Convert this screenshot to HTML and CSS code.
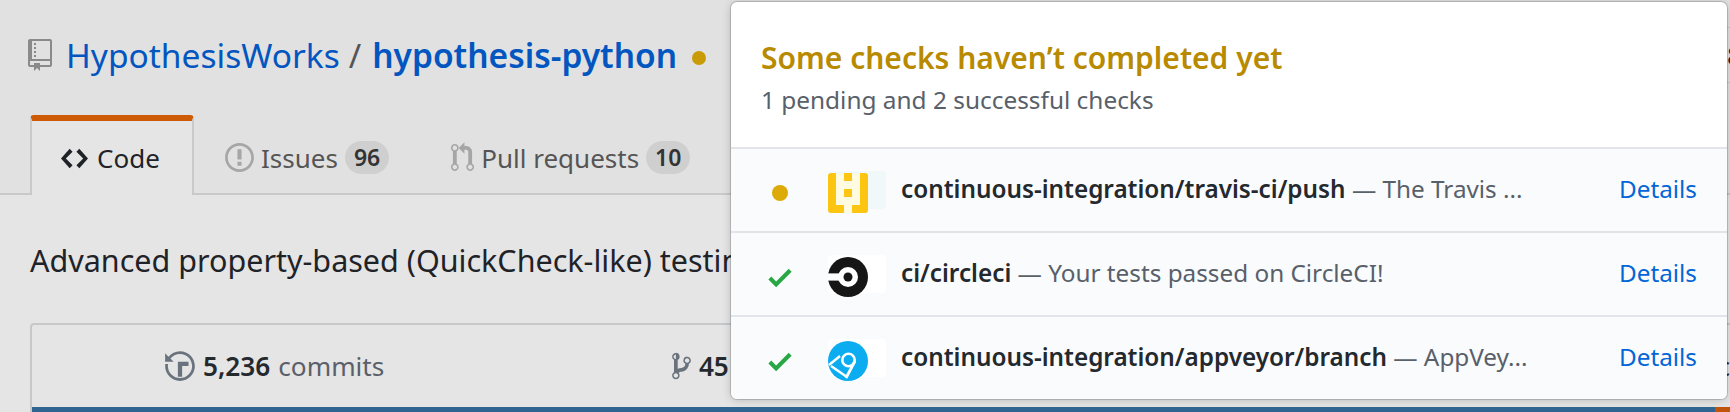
FILE: index.html

```html
<!DOCTYPE html>
<html lang="en">
<head>
  <meta charset="UTF-8" />
  <title>HypothesisWorks / hypothesis-python</title>
  <link rel="stylesheet" href="styles.css">
</head>
<body>

<div class="pagehead">
  <div class="repo-row">
    <h1 class="repo-title">
      <svg class="repo-icon" viewBox="0 0 12 16"><path d="M4 9H3V8h1v1zm0-3H3v1h1V6zm0-2H3v1h1V4zm0-2H3v1h1V2zm8-1v12c0 .55-.45 1-1 1H6v2l-1.5-1.5L3 16v-2H1c-.55 0-1-.45-1-1V1c0-.55.45-1 1-1h10c.55 0 1 .45 1 1zm-1 10H1v2h2v-1h3v1h5v-2zm0-10H2v9h9V1z"/></svg>
      <a href="#">HypothesisWorks</a>
      <span class="slash">/</span>
      <a href="#"><strong>hypothesis-python</strong></a>
      <span class="title-dot"></span>
    </h1>
    <div class="watch-count">8</div>
  </div>
  <nav class="tabs">
    <a class="tab selected" href="#">
      <svg class="tab-icon code-icon" viewBox="0 0 14 16"><path d="M9.5 3L8 4.5 11.5 8 8 11.5 9.5 13 14 8 9.5 3zm-5 0L0 8l4.5 5L6 11.5 2.5 8 6 4.5 4.5 3z"/></svg>
      Code
    </a>
    <a class="tab" href="#">
      <svg class="tab-icon" viewBox="0 0 14 16"><path d="M7 2.3c3.14 0 5.7 2.56 5.7 5.7s-2.56 5.7-5.7 5.7A5.71 5.71 0 0 1 1.3 8c0-3.14 2.56-5.7 5.7-5.7zM7 1C3.14 1 0 4.14 0 8s3.14 7 7 7 7-3.14 7-7-3.14-7-7-7zm1 3H6v5h2V4zm0 6H6v2h2v-2z"/></svg>
      Issues <span class="counter">96</span>
    </a>
    <a class="tab" href="#">
      <svg class="tab-icon pr-icon" viewBox="0 0 12 16"><path d="M11 11.28V5c-.03-.78-.34-1.47-.94-2.06C9.46 2.35 8.78 2.03 8 2H7V0L4 3l3 3V4h1c.27.02.48.11.69.31.21.2.3.42.31.69v6.28A1.993 1.993 0 0 0 10 15a1.993 1.993 0 0 0 1-3.72zm-1 2.92c-.66 0-1.2-.55-1.2-1.2 0-.65.55-1.2 1.2-1.2.65 0 1.2.55 1.2 1.2 0 .65-.55 1.2-1.2 1.2zM4 3c0-1.11-.89-2-2-2a1.993 1.993 0 0 0-1 3.72v6.56A1.993 1.993 0 0 0 2 15a1.993 1.993 0 0 0 1-3.72V4.72c.59-.34 1-.98 1-1.72zm-.8 10c0 .66-.55 1.2-1.2 1.2-.65 0-1.2-.55-1.2-1.2 0-.65.55-1.2 1.2-1.2.65 0 1.2.55 1.2 1.2zM2 4.2C1.34 4.2.8 3.65.8 3c0-.65.55-1.2 1.2-1.2.65 0 1.2.55 1.2 1.2 0 .65-.55 1.2-1.2 1.2z"/></svg>
      Pull requests <span class="counter">10</span>
    </a>
  </nav>
</div>

<p class="repo-desc">Advanced property-based (QuickCheck-like) testing for Python</p>

<div class="summary">
  <div class="numbers">
    <div class="num num-commits">
      <svg class="num-icon" viewBox="0 0 14 16"><path d="M8 13H6V6h5v2H8v5zM7 1C4.81 1 2.87 2.02 1.59 3.59L0 2v4h4L2.5 4.5C3.55 3.17 5.17 2.3 7 2.3c3.14 0 5.7 2.56 5.7 5.7s-2.56 5.7-5.7 5.7A5.71 5.71 0 0 1 1.3 8c0-.34.03-.67.09-1H.08C.03 7.33 0 7.66 0 8c0 3.86 3.14 7 7 7s7-3.14 7-7-3.14-7-7-7z"/></svg>
      <strong>5,236</strong> commits
    </div>
    <div class="num num-branches">
      <svg class="num-icon branch-icon" viewBox="0 0 10 16"><path d="M10 5c0-1.11-.89-2-2-2a1.993 1.993 0 0 0-1 3.72v.3c-.02.52-.23.98-.63 1.38-.4.4-.86.61-1.38.63-.83.02-1.48.16-2 .45V4.72a1.993 1.993 0 0 0-1-3.72C.88 1 0 1.89 0 3a2 2 0 0 0 1 1.72v6.56c-.59.35-1 .99-1 1.72 0 1.11.89 2 2 2 1.11 0 2-.89 2-2 0-.53-.2-1-.53-1.36.09-.06.48-.41.59-.47.25-.11.56-.17.94-.17 1.05-.05 1.95-.45 2.75-1.25S8.95 7.77 9 6.73h-.02C9.59 6.37 10 5.73 10 5zM2 1.8c.66 0 1.2.55 1.2 1.2 0 .65-.55 1.2-1.2 1.2C1.35 4.2.8 3.65.8 3c0-.65.55-1.2 1.2-1.2.65 0 1.2.55 1.2 1.2 0 .65-.55 1.2-1.2 1.2zm0 12.41c-.66 0-1.2-.55-1.2-1.2 0-.65.55-1.2 1.2-1.2.65 0 1.2.55 1.2 1.2 0 .65-.55 1.2-1.2 1.2zm6-8c-.66 0-1.2-.55-1.2-1.2 0-.65.55-1.2 1.2-1.2.65 0 1.2.55 1.2 1.2 0 .65-.55 1.2-1.2 1.2z"/></svg>
      <strong>45</strong> branches
    </div>
    <div class="num num-last">c</div>
  </div>
  <div class="lang-bar">
    <span class="lang-python"></span>
    <span class="lang-other"></span>
  </div>
</div>

<div class="checks-popover">
  <div class="checks-head">
    <div class="checks-title">Some checks haven’t completed yet</div>
    <div class="checks-sub">1 pending and 2 successful checks</div>
  </div>

  <div class="check-row">
    <div class="check-status"><span class="pending-dot"></span></div>
    <div class="app-tile tile-travis">
      <svg viewBox="0 0 40 40">
        <rect width="40" height="40" rx="3" fill="#fcc512"/>
        <path fill="#fffbe0" d="M8 0h24v32H8zM16 32h8v8h-8z"/>
        <path fill="#fcc512" d="M16 0h8v8h-8zM16 16h8v8h-8z"/>
      </svg>
    </div>
    <div class="check-text"><strong>continuous-integration/travis-ci/push</strong> — The Travis ...</div>
    <a class="check-details" href="#">Details</a>
  </div>

  <div class="check-row">
    <div class="check-status">
      <svg class="check-mark" viewBox="0 0 12 16"><path d="M12 5l-8 8-4-4 1.5-1.5L4 10l6.5-6.5L12 5z"/></svg>
    </div>
    <div class="app-tile tile-white">
      <svg viewBox="0 0 40 40">
        <circle cx="20" cy="20" r="20" fill="#161616"/>
        <path fill="#fff" d="M0 16.4h20v7.2H0z"/>
        <circle cx="20" cy="20" r="10" fill="#fff"/>
        <circle cx="20" cy="20" r="4.5" fill="#161616"/>
      </svg>
    </div>
    <div class="check-text"><strong>ci/circleci</strong> — Your tests passed on CircleCI!</div>
    <a class="check-details" href="#">Details</a>
  </div>

  <div class="check-row">
    <div class="check-status">
      <svg class="check-mark" viewBox="0 0 12 16"><path d="M12 5l-8 8-4-4 1.5-1.5L4 10l6.5-6.5L12 5z"/></svg>
    </div>
    <div class="app-tile tile-white">
      <svg viewBox="0 0 40 40">
        <circle cx="20" cy="20" r="20" fill="#0bacf0"/>
        <circle cx="20.5" cy="19" r="6.2" fill="none" stroke="#fff" stroke-width="2.6"/>
        <path fill="none" stroke="#fff" stroke-width="2.4" d="M1 24l11-9M3 25l16 11"/>
        <path fill="none" stroke="#fff" stroke-width="2.8" d="M27 20L18 37"/>
      </svg>
    </div>
    <div class="check-text"><strong>continuous-integration/appveyor/branch</strong> — AppVey...</div>
    <a class="check-details" href="#">Details</a>
  </div>
</div>

</body>
</html>
```

FILE: styles.css

```css
body {
  margin: 0;
  width: 1730px;
  height: 412px;
  overflow: hidden;
  position: relative;
  font-family: "Noto Sans", sans-serif;
  background: #e5e5e5;
  color: #1f2328;
}

a {
  text-decoration: none;
}

.pagehead {
  background: #e1e1e1;
  height: 195px;
  box-sizing: border-box;
  border-bottom: 2px solid #c9c9c9;
}

.repo-row {
  display: flex;
  justify-content: space-between;
  height: 115px;
}

.repo-title {
  display: flex;
  align-items: center;
  gap: 9px;
  margin: 0;
  padding-left: 28px;
  height: 109px;
  box-sizing: border-box;
  font-size: 33.5px;
  font-weight: 400;
}

.repo-title a {
  color: #0356c0;
}

.repo-title strong {
  font-weight: 600;
}

.slash {
  color: #555;
  margin-right: 2px;
}

.repo-icon {
  width: 24px;
  height: 32px;
  fill: #8a8a8a;
  margin-right: 5px;
}

.title-dot {
  width: 14px;
  height: 14px;
  border-radius: 50%;
  background: #c99b06;
  margin: 7px 0 0 6px;
}

.watch-count {
  width: 3px;
  height: 54px;
  margin-top: 27px;
  border-top: 1px solid #c9c9c9;
  border-bottom: 1px solid #c9c9c9;
  font-size: 26px;
  line-height: 54px;
  overflow: hidden;
}

.tabs {
  display: flex;
  height: 79px;
  padding-left: 30px;
  align-items: flex-start;
}

.tab {
  display: flex;
  align-items: center;
  gap: 7px;
  height: 73px;
  padding-top: 6px;
  font-size: 26px;
  color: #555;
  margin-right: 62px;
}

.tab.selected {
  width: 164px;
  box-sizing: border-box;
  height: 80px;
  padding: 0 0 0 29px;
  gap: 9px;
  margin-right: 31px;
  color: #1f2328;
  background: #e5e5e5;
  border: solid #c9c9c9;
  border-width: 6px 2px 0;
  border-top-color: #ce5a06;
  border-radius: 4px 4px 0 0;
}

.tab-icon {
  width: 29px;
  height: 33px;
  fill: #a6a6a6;
}

.code-icon {
  width: 27px;
  height: 31px;
  fill: #1f2328;
}

.pr-icon {
  width: 23px;
  height: 31px;
}

.counter {
  display: inline-block;
  padding: 0 9px;
  height: 33px;
  line-height: 33px;
  border-radius: 17px;
  background: #cfcfcf;
  color: #333;
  font-size: 23px;
  font-weight: 600;
  text-align: center;
}

.repo-desc {
  margin: 0;
  padding: 47px 0 0 30px;
  height: 128px;
  box-sizing: border-box;
  font-size: 30.5px;
  line-height: 36px;
  white-space: nowrap;
}

.summary {
  margin-left: 30px;
  border: solid #c6c8ca;
  border-width: 2px 0 0 2px;
  border-radius: 4px 0 0 0;
}

.numbers {
  display: flex;
  height: 82px;
  font-size: 26.2px;
  color: #5a6069;
}

.num {
  display: flex;
  align-items: center;
  gap: 8px;
  white-space: nowrap;
}

.num strong {
  color: #24292e;
  font-weight: 600;
}

.num-commits {
  margin-left: 133px;
  width: 510px;
}

.num-branches {
  width: 1052px;
}

.num-last {
  color: #24292e;
}

.num-icon {
  width: 30px;
  height: 34px;
  fill: #6a737d;
}

.branch-icon {
  width: 19px;
  height: 30px;
}

.lang-bar {
  display: flex;
  height: 6px;
}

.lang-python {
  flex: 1;
  background: #2f6590;
}

.lang-other {
  width: 15px;
  background: #c0540c;
}

/* popover sits over the page */
.checks-popover {
  position: absolute;
  left: 731px;
  top: 2px;
  width: 996px;
  height: 397px;
  background: #fff;
  border-radius: 6px;
  box-shadow: 0 0 0 1px rgba(0, 0, 0, 0.15), 0 1px 10px rgba(0, 0, 0, 0.2);
  overflow: hidden;
}

.checks-head {
  height: 145px;
  box-sizing: border-box;
  padding: 34px 0 0 30px;
}

.checks-title {
  color: #b88a00;
  font-size: 30px;
  font-weight: 600;
  line-height: 44px;
}

.checks-sub {
  color: #586069;
  font-size: 24.4px;
  line-height: 40px;
}

.check-row {
  display: flex;
  align-items: center;
  height: 84px;
  box-sizing: border-box;
  background: #fafbfd;
  border-top: 2px solid #e1e4e8;
  font-size: 24.3px;
}

.check-status {
  width: 97px;
  display: flex;
  justify-content: center;
  flex-shrink: 0;
  padding-top: 6px;
}

.pending-dot {
  width: 16px;
  height: 16px;
  border-radius: 50%;
  background: #dcab08;
}

.check-mark {
  width: 24px;
  height: 31px;
  fill: #28a745;
}

.app-tile {
  width: 58px;
  height: 38px;
  border-radius: 4px;
  flex-shrink: 0;
  margin-right: 15px;
}

.app-tile svg {
  display: block;
  width: 40px;
  height: 40px;
  margin-top: 2px;
}

.tile-travis {
  background: #f1f8fa;
}

.tile-white {
  background: #fff;
}

.check-text {
  flex: 1;
  color: #586069;
  white-space: nowrap;
  overflow: hidden;
  padding-bottom: 3px;
}

.check-text strong {
  color: #24292e;
  font-weight: 600;
}

.check-details {
  color: #0366d6;
  margin-right: 30px;
  padding-bottom: 3px;
}
```
